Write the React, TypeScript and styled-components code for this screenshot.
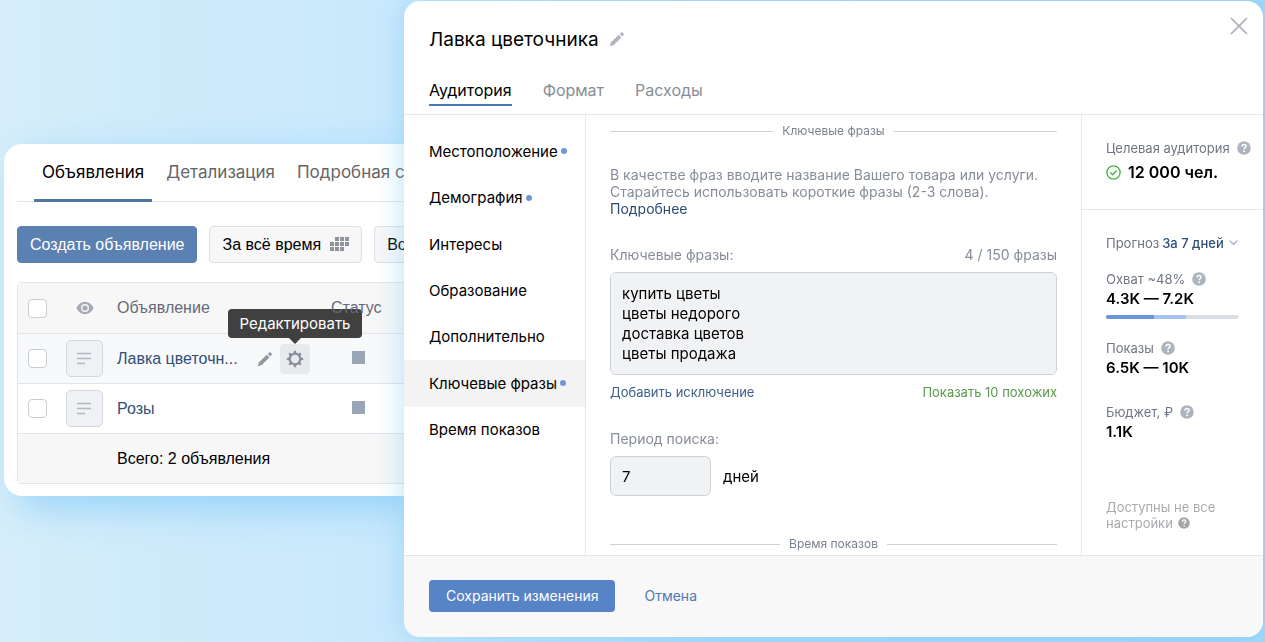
import React from 'react';
import styled, { createGlobalStyle } from 'styled-components';

const ui = 'Inter, "Noto Sans", sans-serif';
const helv = '"Liberation Sans", Arial, sans-serif';

const GlobalStyle = createGlobalStyle`
  *, *::before, *::after { box-sizing: border-box; }
  body { margin: 0; font-family: ${ui}; color: #000; }
  button, input, textarea { font: inherit; color: inherit; margin: 0; }
  button { cursor: pointer; }
  a { text-decoration: none; }
  svg { display: block; flex: none; }
`;

const Page = styled.div`
  display: grid;
  grid-template-columns: 400px minmax(0, 1fr);
  align-items: start;
  min-height: 100vh;
  padding: 1px 2px 5px 4px;
  background: linear-gradient(90deg, #d6eefa 0%, #cdeafb 16%, #c9e9fc 32%, #a8dafa 60%, #a2d8f9 100%);
`;

/* Campaign list behind the dialog */

const ListPanel = styled.main`
  margin-top: 143px;
  padding: 0 0 12px 13px;
  overflow: hidden;
  border-radius: 18px 0 0 18px;
  background: #fff;
  font-family: ${helv};
  box-shadow: 14px 12px 36px rgba(120, 198, 248, 0.65);
`;

const ListTabs = styled.nav`
  display: flex;
  gap: 6px;
  height: 58px;
  padding-left: 17px;
  border-bottom: 1px solid #e4e6ea;
`;

const ListTab = styled.a<{ $active?: boolean }>`
  flex: none;
  display: flex;
  align-items: center;
  height: 58px;
  padding: 0 8px;
  border-bottom: 3px solid ${p => (p.$active ? '#5076a3' : 'transparent')};
  color: ${p => (p.$active ? '#000' : '#656565')};
  font-family: ${ui};
  font-size: 17px;
  white-space: nowrap;
`;

const Toolbar = styled.div`
  display: flex;
  gap: 12px;
  padding: 24px 0 19px;
`;

const ToolButton = styled.button<{ $primary?: boolean }>`
  flex: none;
  display: flex;
  align-items: center;
  gap: 9px;
  height: 37px;
  padding: 0 12px;
  border: 1px solid ${p => (p.$primary ? '#5b80b2' : '#dcdee1')};
  border-radius: 4px;
  background: ${p => (p.$primary ? '#5b80b2' : '#f7f7f8')};
  color: ${p => (p.$primary ? '#fff' : '#000')};
  font-size: 16px;
  white-space: nowrap;
`;

const Table = styled.table`
  width: 460px;
  table-layout: fixed;
  border-collapse: separate;
  border-spacing: 0;
  border: 1px solid #e2e4e8;
  border-radius: 4px;
  font-size: 16px;
`;

const Row = styled.tr<{ $bg: string }>`
  background: ${p => p.$bg};
  tbody > & > *, tfoot > & > * { border-top: 1px solid #e2e4e8; }
`;

const Cell = styled.td<{ $name?: boolean }>`
  height: 50px;
  padding: 0 0 0 ${p => (p.$name ? 6 : 0)}px;
  font-weight: 400;
  text-align: left;
`;

const HeadCell = styled(Cell).attrs({ as: 'th', scope: 'col' })`
  color: #656b78;
`;

const StatusLabel = styled.span`
  position: relative;
  z-index: 3;
`;

const Check = styled.input`
  appearance: none;
  display: block;
  width: 19px;
  height: 19px;
  margin: 0 0 0 10px;
  border: 1px solid #c8ccd3;
  border-radius: 4px;
  background: #fff;
`;

const Centered = styled.div`
  display: flex;
  justify-content: center;
`;

const Thumb = styled.div`
  display: grid;
  place-items: center;
  width: 37px;
  height: 37px;
  margin: 0 auto;
  border: 1px solid #d3d6dc;
  border-radius: 5px;
  background: #f0f1f4;
`;

const NameLine = styled.div`
  display: flex;
  align-items: center;
`;

const NameLink = styled.a`
  min-width: 124px;
  color: #2f5078;
  white-space: nowrap;
`;

const BareButton = styled.button`
  display: grid;
  place-items: center;
  padding: 0;
  border: 0;
  background: none;
`;

const RowPencil = styled(BareButton)`
  width: 16px;
  height: 16px;
  margin: 0 7px 0 16px;
`;

const GearButton = styled(BareButton)`
  position: relative;
  width: 30px;
  height: 30px;
  border-radius: 4px;
  background: #e7e9ed;
`;

const Tooltip = styled.span`
  position: absolute;
  z-index: 2;
  bottom: 36px;
  left: 50%;
  width: 134px;
  transform: translateX(-50%);
  border-radius: 4px;
  background: #404040;
  color: #fff;
  font: 400 15px/29px ${ui};
  text-align: center;
  &::after {
    content: '';
    position: absolute;
    top: 100%;
    left: 50%;
    margin-left: -6px;
    border: 6px solid transparent;
    border-top-color: #404040;
    border-bottom: 0;
  }
`;

const StatusSquare = styled.span`
  display: block;
  width: 13px;
  height: 13px;
  margin: 0 0 3px 21px;
  background: #9aa6b5;
`;

/* Dialog */

const Dialog = styled.section`
  position: relative;
  z-index: 4;
  display: flex;
  flex-direction: column;
  min-height: calc(100vh - 6px);
  overflow: hidden;
  border-radius: 16px;
  background: #fff;
  box-shadow: 0 0 28px rgba(120, 196, 246, 0.5);
`;

const DialogHeader = styled.header`
  height: 114px;
  padding: 24px 15px 0 25px;
  border-bottom: 1px solid #e7e8ec;
`;

const TitleLine = styled.div`
  display: flex;
  align-items: center;
  gap: 10px;
  height: 28px;
`;

const Title = styled.h1`
  margin: 0;
  font-size: 19px;
  font-weight: 400;
`;

const CloseButton = styled(BareButton)`
  align-self: flex-start;
  width: 18px;
  height: 18px;
  margin: -8px 0 0 auto;
`;

const DialogTabs = styled.nav`
  display: flex;
  gap: 31px;
  margin-top: 26px;
`;

const DialogTab = styled.a<{ $active?: boolean }>`
  height: 27px;
  border-bottom: 2px solid ${p => (p.$active ? '#4a76bd' : 'transparent')};
  color: ${p => (p.$active ? '#000' : '#868d98')};
  font-size: 16px;
  line-height: 22px;
`;

const Body = styled.div`
  flex: 1;
  display: grid;
  grid-template-columns: 182px minmax(0, 1fr) 182px;
`;

const SideNav = styled.nav`
  display: grid;
  grid-auto-rows: 1fr;
  height: 338px;
  padding-top: 13px;
`;

const NavColumn = styled.div`
  border-right: 1px solid #e7e8ec;
`;

const NavItem = styled.a<{ $active?: boolean }>`
  display: flex;
  align-items: center;
  gap: 3px;
  padding-left: 25px;
  background: ${p => (p.$active ? '#f3f3f4' : 'transparent')};
  color: #000;
  font-size: 15px;
`;

const Dot = styled.i`
  width: 6px;
  height: 6px;
  border-radius: 50%;
  background: #6d97d8;
`;

const Form = styled.form`
  padding: 7px 24px 0;
  color: #868d98;
  font-size: 14px;
`;

const Divider = styled.h2`
  display: flex;
  align-items: center;
  gap: 9px;
  margin: 0;
  color: #7b828d;
  font-size: 12px;
  font-weight: 400;
  line-height: 18px;
  &::before, &::after {
    content: '';
    flex: 1;
    height: 1px;
    background: #cfd1d4;
  }
`;

const Hint = styled.p`
  margin: 26px 0 29px;
  line-height: 17px;
  a { display: block; color: #2a4b75; }
`;

const SplitLine = styled.div`
  display: flex;
  justify-content: space-between;
  line-height: 18px;
`;

const Phrases = styled.textarea`
  display: block;
  width: 100%;
  height: 103px;
  margin: 8px 0;
  padding: 11px;
  resize: none;
  border: 1px solid #cdd0d5;
  border-radius: 6px;
  background: #f1f2f4;
  color: #000;
  font-size: 15px;
  line-height: 20px;
`;

const SmallLink = styled.a<{ $green?: boolean }>`
  color: ${p => (p.$green ? '#5a9a4c' : '#3f608c')};
  font-size: 13px;
`;

const PeriodLabel = styled.label`
  display: block;
  margin: 29px 0 8px;
  line-height: 18px;
`;

const PeriodLine = styled.div`
  display: flex;
  align-items: center;
  gap: 12px;
  margin-bottom: 39px;
  color: #000;
  font-size: 15px;
`;

const PeriodInput = styled.input`
  width: 101px;
  height: 40px;
  padding: 0 11px;
  border: 1px solid #cdd0d5;
  border-radius: 6px;
  background: #f1f2f4;
`;

const Aside = styled.aside`
  border-left: 1px solid #e7e8ec;
  color: #6f7682;
  font-size: 13px;
`;

const AsideTop = styled.div`
  height: 95px;
  padding: 24px 0 0 24px;
  border-bottom: 1px solid #e7e8ec;
`;

const AsideRest = styled.div`
  padding: 24px 24px 0;
`;

const Forecast = styled.div`
  display: flex;
  align-items: center;
  gap: 3px;
  margin-bottom: 18px;
  line-height: 18px;
  white-space: nowrap;
`;

const ForecastButton = styled(BareButton)`
  flex: none;
  display: flex;
  align-items: center;
  gap: 5px;
  color: #2f5078;
  font-weight: 500;
  white-space: nowrap;
`;

const StatLabel = styled.div`
  display: flex;
  align-items: center;
  gap: 7px;
  line-height: 18px;
  white-space: nowrap;
`;

const StatValue = styled.div<{ $gap?: number }>`
  display: flex;
  align-items: center;
  gap: 7px;
  margin-bottom: ${p => p.$gap ?? 0}px;
  color: #000;
  font-size: 15px;
  font-weight: 600;
  line-height: 22px;
`;

const TopValue = styled(StatValue)`
  margin-top: 4px;
  font-size: 16px;
`;

const Bar = styled.div`
  display: flex;
  height: 4px;
  margin: 5px 0 20px;
  overflow: hidden;
  border-radius: 2px;
  background: #dadde3;
`;

const BarPart = styled.i<{ $share: number; $color: string }>`
  width: ${p => p.$share}%;
  background: ${p => p.$color};
`;

const Note = styled.p`
  display: flex;
  flex-wrap: wrap;
  align-items: center;
  column-gap: 5px;
  margin: 56px 0 0;
  color: #a9abae;
  line-height: 16px;
`;

const DialogFooter = styled.footer`
  display: flex;
  align-items: center;
  gap: 29px;
  height: 82px;
  padding: 0 25px 2px;
  border-top: 1px solid #e4e5e9;
  background: #f8f8f8;
  font-size: 14px;
`;

const SaveButton = styled.button`
  height: 32px;
  padding: 0 17px;
  border: 0;
  border-radius: 4px;
  background: #5783c7;
  color: #fff;
`;

const CancelButton = styled(BareButton)`
  color: #4f79b5;
`;

const PencilIcon = ({ color }: { color: string }) => (
  <svg width="16" height="16" viewBox="0 0 16 16" fill={color}>
    <path d="M.8 15.200l1.200-4L9.800 3.800l2.600 2.600L4.800 14z" />
    <path d="M10.800 2.900l1.400-1.300c.4-.4 1-.4 1.400 0l1 1c.4.4.4 1 0 1.400l-1.300 1.400z" />
  </svg>
);

const GearIcon = () => (
  <svg width="18" height="18" viewBox="0 0 18 18" fill="none" stroke="#848d9a">
    <circle cx="9" cy="9" r="5.200" strokeWidth="2" />
    {[0, 45, 90, 135, 180, 225, 270, 315].map(a => (
      <path key={a} d="M7.200 3.600L8.200 .8h1.600l1 2.800z" fill="#848d9a" stroke="none" transform={`rotate(${a} 9 9)`} />
    ))}
  </svg>
);

const EyeIcon = () => (
  <svg width="18" height="14" viewBox="0 0 18 14">
    <path d="M9 1C4.800 1 1.800 3.700.5 7c1.300 3.300 4.300 6 8.500 6s7.200-2.700 8.500-6C16.200 3.700 13.200 1 9 1z" fill="#a4abb6" />
    <circle cx="9" cy="7" r="4" fill="#f7f7f8" />
    <circle cx="9" cy="7" r="2.600" fill="#a4abb6" />
  </svg>
);

const CalendarIcon = () => (
  <svg width="19" height="15" viewBox="0 0 19 15" fill="#8f949c">
    {[[5, 0], [10, 0], [15, 0], [0, 5], [5, 5], [10, 5], [15, 5], [0, 10], [5, 10], [10, 10]].map(([x, y]) => (
      <rect key={`${x}-${y}`} x={x} y={y} width="4" height="4" />
    ))}
  </svg>
);

const LinesIcon = () => (
  <svg width="15" height="13" viewBox="0 0 15 13" stroke="#b3b8c1" strokeWidth="1.400">
    <path d="M0 1.500h14M0 6.500h14M0 11.500h8" />
  </svg>
);

const HelpIcon = ({ size = 14, color = '#aeb4be' }: { size?: number; color?: string }) => (
  <svg width={size} height={size} viewBox="0 0 14 14">
    <circle cx="7" cy="7" r="6.800" fill={color} />
    <path d="M5 5.500c0-1.300.9-2.100 2.100-2.100s2 .8 2 1.800c0 1.500-2 1.500-2 3.100" fill="none" stroke="#fff" strokeWidth="1.500" />
    <circle cx="7.100" cy="10.200" r=".95" fill="#fff" />
  </svg>
);

const CheckIcon = () => (
  <svg width="15" height="15" viewBox="0 0 15 15" fill="none" stroke="#4bb34b" strokeWidth="1.400">
    <circle cx="7.500" cy="7.500" r="6.600" />
    <path d="M4.500 7.700l2.100 2.100 4-4" strokeLinecap="round" strokeLinejoin="round" />
  </svg>
);

const CloseIcon = () => (
  <svg width="18" height="18" viewBox="0 0 18 18" stroke="#a9adb4" strokeWidth="1.700" strokeLinecap="round">
    <path d="M1.500 1.500l15 15M16.500 1.500l-15 15" />
  </svg>
);

const ChevronIcon = () => (
  <svg width="9" height="6" viewBox="0 0 9 6" fill="none" stroke="#a7b4c6" strokeWidth="1.300" strokeLinecap="round">
    <path d="M1 1l3.500 3.300L8 1" />
  </svg>
);

const sections = [
  { name: 'Местоположение', set: true },
  { name: 'Демография', set: true },
  { name: 'Интересы' },
  { name: 'Образование' },
  { name: 'Дополнительно' },
  { name: 'Ключевые фразы', set: true, active: true },
  { name: 'Время показов' },
];

const ads = [
  { name: 'Лавка цветочн...', hovered: true },
  { name: 'Розы' },
];

const phrases = 'купить цветы\nцветы недорого\nдоставка цветов\nцветы продажа';

export default function App() {
  return (
    <Page>
      <GlobalStyle />
      <ListPanel>
        <ListTabs>
          <ListTab href="#ads" $active>Объявления</ListTab>
          <ListTab href="#details">Детализация</ListTab>
          <ListTab href="#stats">Подробная ст</ListTab>
        </ListTabs>
        <Toolbar>
          <ToolButton type="button" $primary>Создать объявление</ToolButton>
          <ToolButton type="button">За всё время <CalendarIcon /></ToolButton>
          <ToolButton type="button">Во</ToolButton>
        </Toolbar>
        <Table>
          <colgroup>
            <col width="40" />
            <col width="53" />
            <col width="220" />
            <col />
          </colgroup>
          <thead>
            <Row $bg="#f7f7f8">
              <HeadCell><Check type="checkbox" aria-label="Выбрать все" /></HeadCell>
              <HeadCell><Centered><EyeIcon /></Centered></HeadCell>
              <HeadCell $name>Объявление</HeadCell>
              <HeadCell><StatusLabel>Статус</StatusLabel></HeadCell>
            </Row>
          </thead>
          <tbody>
            {ads.map(ad => (
              <Row key={ad.name} $bg={ad.hovered ? '#f8f9fb' : '#fff'}>
                <Cell><Check type="checkbox" aria-label={ad.name} /></Cell>
                <Cell><Thumb><LinesIcon /></Thumb></Cell>
                <Cell $name>
                  <NameLine>
                    <NameLink href="#ad">{ad.name}</NameLink>
                    {ad.hovered && (
                      <>
                        <RowPencil type="button" aria-label="Переименовать"><PencilIcon color="#9299a5" /></RowPencil>
                        <GearButton type="button">
                          <GearIcon />
                          <Tooltip role="tooltip">Редактировать</Tooltip>
                        </GearButton>
                      </>
                    )}
                  </NameLine>
                </Cell>
                <Cell><StatusSquare /></Cell>
              </Row>
            ))}
          </tbody>
          <tfoot>
            <Row $bg="#f7f7f8">
              <Cell colSpan={2} />
              <Cell $name colSpan={2}>Всего: 2 объявления</Cell>
            </Row>
          </tfoot>
        </Table>
      </ListPanel>

      <Dialog role="dialog" aria-labelledby="dialog-title">
        <DialogHeader>
          <TitleLine>
            <Title id="dialog-title">Лавка цветочника</Title>
            <BareButton type="button" aria-label="Переименовать"><PencilIcon color="#b0b5be" /></BareButton>
            <CloseButton type="button" aria-label="Закрыть"><CloseIcon /></CloseButton>
          </TitleLine>
          <DialogTabs>
            <DialogTab href="#audience" $active>Аудитория</DialogTab>
            <DialogTab href="#format">Формат</DialogTab>
            <DialogTab href="#costs">Расходы</DialogTab>
          </DialogTabs>
        </DialogHeader>
        <Body>
          <NavColumn>
            <SideNav>
              {sections.map(s => (
                <NavItem key={s.name} href="#section" $active={s.active}>
                  {s.name}
                  {s.set && <Dot />}
                </NavItem>
              ))}
            </SideNav>
          </NavColumn>
          <Form id="audience-form">
            <Divider>Ключевые фразы</Divider>
            <Hint>
              В качестве фраз вводите название Вашего товара или услуги. Старайтесь использовать короткие фразы (2-3 слова).
              <a href="#more">Подробнее</a>
            </Hint>
            <SplitLine>
              <label htmlFor="phrases">Ключевые фразы:</label>
              <span>4 / 150 фразы</span>
            </SplitLine>
            <Phrases id="phrases" defaultValue={phrases} />
            <SplitLine>
              <SmallLink href="#exclude">Добавить исключение</SmallLink>
              <SmallLink href="#similar" $green>Показать 10 похожих</SmallLink>
            </SplitLine>
            <PeriodLabel htmlFor="period">Период поиска:</PeriodLabel>
            <PeriodLine>
              <PeriodInput id="period" type="text" defaultValue="7" />
              <span>дней</span>
            </PeriodLine>
            <Divider>Время показов</Divider>
          </Form>
          <Aside>
            <AsideTop>
              <StatLabel>Целевая аудитория <HelpIcon /></StatLabel>
              <TopValue><CheckIcon />12 000 чел.</TopValue>
            </AsideTop>
            <AsideRest>
              <Forecast>
                Прогноз
                <ForecastButton type="button">За 7 дней <ChevronIcon /></ForecastButton>
              </Forecast>
              <StatLabel>Охват ~48% <HelpIcon /></StatLabel>
              <StatValue>4.3K — 7.2K</StatValue>
              <Bar>
                <BarPart $share={36} $color="#6b96da" />
                <BarPart $share={24} $color="#a5c3ee" />
              </Bar>
              <StatLabel>Показы <HelpIcon /></StatLabel>
              <StatValue $gap={24}>6.5K — 10K</StatValue>
              <StatLabel>Бюджет, ₽ <HelpIcon /></StatLabel>
              <StatValue>1.1K</StatValue>
              <Note>
                <span>Доступны не все</span>
                <span>настройки</span>
                <HelpIcon size={12} color="#a3a5a9" />
              </Note>
            </AsideRest>
          </Aside>
        </Body>
        <DialogFooter>
          <SaveButton type="submit" form="audience-form">Сохранить изменения</SaveButton>
          <CancelButton type="button">Отмена</CancelButton>
        </DialogFooter>
      </Dialog>
    </Page>
  );
}
